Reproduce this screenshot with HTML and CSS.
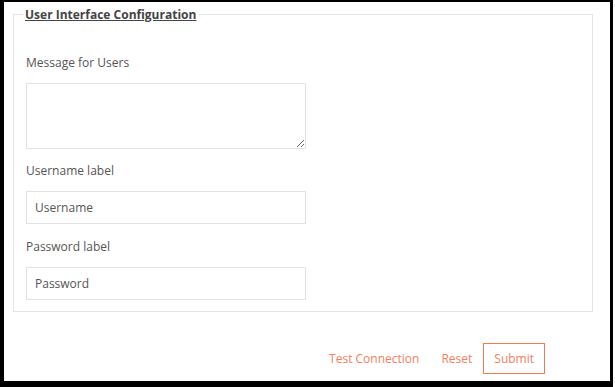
FILE: index.html
```html
<!DOCTYPE html>
<html lang="en">
<head>
    <meta charset="UTF-8">
    <meta name="viewport" content="width=device-width, initial-scale=1.0">
    <title>User Interface Configuration</title>
    <link rel="stylesheet" href="styles.css">
</head>
<body>
    <div class="frame">
        <form class="config-form">
            <fieldset class="config-group">
                <legend>User Interface Configuration</legend>
                <div class="field first">
                    <label for="message">Message for Users</label>
                    <textarea id="message"></textarea>
                </div>
                <div class="field">
                    <label for="username">Username label</label>
                    <input id="username" type="text" placeholder="Username">
                </div>
                <div class="field last">
                    <label for="password">Password label</label>
                    <input id="password" type="text" placeholder="Password">
                </div>
            </fieldset>
            <div class="actions">
                <button type="button" class="btn">Test Connection</button>
                <button type="reset" class="btn">Reset</button>
                <button type="submit" class="btn btn-outline">Submit</button>
            </div>
        </form>
    </div>
</body>
</html>
```

FILE: styles.css
```css
body {
    margin: 0;
    background: #ffffff;
    font-family: "Open Sans", Arial, sans-serif;
    font-size: 12px;
    color: #555555;
}

.frame {
    box-sizing: border-box;
    width: 613px;
    height: 387px;
    border-style: solid;
    border-color: #000000;
    border-width: 2px 3px 6px 4px;
    padding: 4px 17px 0 9px;
}

.config-group {
    margin: 0;
    padding: 0 12px 11px;
    border: 1px solid #e4e4e4;
}

.config-group legend {
    padding: 0 2px;
    margin-left: -3px;
    font-weight: bold;
    color: #444444;
    text-decoration: underline;
    line-height: 17px;
}

.field {
    display: flex;
    flex-direction: column;
    margin-top: 13px;
}

.field.first {
    margin-top: 31px;
}

.field.last {
    margin-top: 14px;
}

.field label {
    line-height: 17px;
    margin-bottom: 12px;
}

.field textarea,
.field input {
    box-sizing: border-box;
    width: 280px;
    border: 1px solid #e2e2e2;
    font-family: inherit;
    font-size: 12px;
    color: #555555;
    outline: none;
}

.field textarea {
    height: 66px;
    margin: 0;
}

.field input {
    height: 33px;
    padding: 0 8px;
}

.field input::placeholder {
    color: #555555;
}

.actions {
    display: flex;
    justify-content: flex-end;
    margin-top: 31px;
    padding-right: 48px;
}

.btn {
    height: 31px;
    margin: 0;
    padding: 0 10px;
    border: 1px solid transparent;
    background: none;
    font-family: inherit;
    font-size: 12px;
    color: #f2805f;
    cursor: pointer;
}

.btn-outline {
    border-color: #f07a55;
}
```
